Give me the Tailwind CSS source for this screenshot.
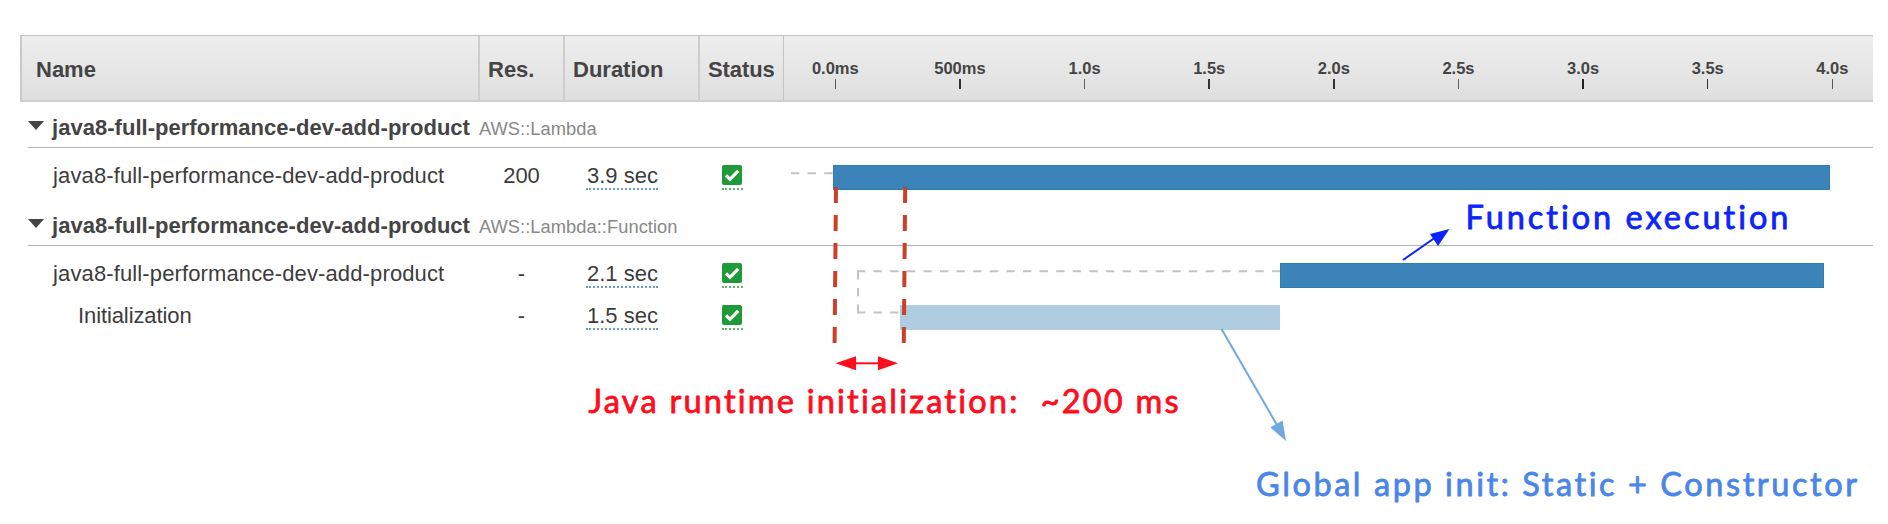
<!DOCTYPE html>
<html lang="en">
<head>
<meta charset="utf-8">
<title>Trace timeline</title>
<script src="https://cdn.jsdelivr.net/npm/@tailwindcss/browser@4"></script>
</head>
<body class="bg-white">
<svg class="hidden">
  <symbol id="check" viewBox="0 0 20 20"><rect width="20" height="20" rx="2" fill="#1f9a38"/><path d="M4 10.3l4 4 8.2-8.5" fill="none" stroke="#fff" stroke-width="3.2"/></symbol>
</svg>
<main class="relative h-[524px] w-[1888px] overflow-hidden pt-[35px] pl-5 font-['Liberation_Sans',Arial,sans-serif] text-[22px] leading-[26px] text-[#3c3c3c]">
  <header class="flex h-[67px] w-[1853px] border-t border-b-2 border-l-2 border-t-[#c4c4c4] border-b-[#cfcfcf] border-l-[#cacaca] bg-linear-to-b from-[#eeeeee] to-[#dfdfdf] font-bold text-[#444]">
    <div class="flex w-[458px] shrink-0 items-center border-r-2 border-[#cdcdcd] pl-[14px] pt-[3px]">Name</div>
    <div class="flex w-[85px] shrink-0 items-center border-r-2 border-[#cdcdcd] pl-2 pt-[3px]">Res.</div>
    <div class="flex w-[135px] shrink-0 items-center border-r-2 border-[#cdcdcd] pl-2 pt-[3px]">Duration</div>
    <div class="flex w-[84px] shrink-0 items-center border-r border-[#c4c4c4] pl-2 pt-[3px] tracking-[-0.1px]">Status</div>
    <div class="-ml-[11px] flex shrink-0 pt-[22px] text-[16.5px] leading-5">
      <div class="flex w-[124.63px] shrink-0 flex-col items-center">0.0ms<i class="mt-px h-[10px] w-[1.5px] bg-[#555]"></i></div>
      <div class="flex w-[124.63px] shrink-0 flex-col items-center">500ms<i class="mt-px h-[10px] w-[1.5px] bg-[#333]"></i></div>
      <div class="flex w-[124.63px] shrink-0 flex-col items-center">1.0s<i class="mt-px h-[10px] w-[1.5px] bg-[#666]"></i></div>
      <div class="flex w-[124.63px] shrink-0 flex-col items-center">1.5s<i class="mt-px h-[10px] w-[1.5px] bg-[#333]"></i></div>
      <div class="flex w-[124.63px] shrink-0 flex-col items-center">2.0s<i class="mt-px h-[10px] w-[1.5px] bg-[#333]"></i></div>
      <div class="flex w-[124.63px] shrink-0 flex-col items-center">2.5s<i class="mt-px h-[10px] w-[1.5px] bg-[#666]"></i></div>
      <div class="flex w-[124.63px] shrink-0 flex-col items-center">3.0s<i class="mt-px h-[10px] w-[1.5px] bg-[#222]"></i></div>
      <div class="flex w-[124.63px] shrink-0 flex-col items-center">3.5s<i class="mt-px h-[10px] w-[1.5px] bg-[#333]"></i></div>
      <div class="flex w-[124.63px] shrink-0 flex-col items-center">4.0s<i class="mt-px h-[10px] w-[1.5px] bg-[#555]"></i></div>
    </div>
  </header>

  <section class="ml-2 flex h-[46px] w-[1845px] items-center border-b border-[#b4b4b4] pt-[5px]">
    <svg class="mb-[3px] h-[9px] w-4" viewBox="0 0 16 9"><path d="M0 0h16L8 9z" fill="#444"/></svg>
    <h2 class="ml-2 w-[427px] pt-[2px] font-bold tracking-[0.03px] text-[#444]">java8-full-performance-dev-add-product</h2>
    <span class="pt-[3px] text-[18.3px] tracking-[0.05px] text-[#888]">AWS::Lambda</span>
  </section>
  <div class="flex h-[52px] w-[1853px] items-center pt-[2px]">
    <div class="w-[459px] pt-[2px] pl-[33px] tracking-[0.13px]">java8-full-performance-dev-add-product</div>
    <div class="w-[85px] pt-[2px] text-center">200</div>
    <div class="w-[134px] pl-[22px]"><span class="inline-block h-[29px] w-[72px] border-b-2 border-dotted border-[#6a9bd0] pl-px leading-[30px]">3.9 sec</span></div>
    <div class="w-[86px] pl-6"><svg class="mt-1 h-5 w-5"><use href="#check"/></svg><i class="mt-[3px] block w-[21px] border-b-2 border-dotted border-[#5fb570]"></i></div>
    <div class="flex pt-1 pl-[7px]">
      <svg class="h-[25px] w-[42px]"><path d="M0 8.3H42" stroke="#c3c3c3" stroke-width="2" stroke-dasharray="8.3 8.3"/></svg>
      <div class="h-[25px] w-[996.5px] border border-[#2a7fb6] bg-[#3b83b9]"></div>
    </div>
  </div>

  <section class="ml-2 flex h-[46px] w-[1845px] items-center border-b border-[#b4b4b4] pt-[5px]">
    <svg class="mb-[3px] h-[9px] w-4" viewBox="0 0 16 9"><path d="M0 0h16L8 9z" fill="#444"/></svg>
    <h2 class="ml-2 w-[427px] pt-[2px] font-bold tracking-[0.03px] text-[#444]">java8-full-performance-dev-add-product</h2>
    <span class="pt-[3px] text-[18.3px] tracking-[0.05px] text-[#888]">AWS::Lambda::Function</span>
  </section>
  <div class="flex h-[48px] w-[1853px] items-center pt-[7px]">
    <div class="w-[459px] pt-px pl-[33px] tracking-[0.13px]">java8-full-performance-dev-add-product</div>
    <div class="w-[85px] pt-px text-center">-</div>
    <div class="w-[134px] pl-[22px]"><span class="inline-block h-[29px] w-[72px] border-b-2 border-dotted border-[#6a9bd0] pl-px leading-[30px]">2.1 sec</span></div>
    <div class="w-[86px] pl-6"><svg class="mt-1 h-5 w-5"><use href="#check"/></svg><i class="mt-[3px] block w-[21px] border-b-2 border-dotted border-[#5fb570]"></i></div>
    <div class="flex pt-1 pl-[73px]">
      <svg class="h-[25px] w-[423px] overflow-visible" fill="none" stroke="#c3c3c3" stroke-width="2" stroke-dasharray="8.3 8.3"><path d="M0 8.3H423M1 8.3V50M0 49.6H42"/></svg>
      <div class="h-[25px] w-[544px] border border-[#2a7fb6] bg-[#3b83b9]"></div>
    </div>
  </div>
  <div class="flex h-[42px] w-[1853px] items-center">
    <div class="w-[459px] pt-[2px] pl-[58px] tracking-[-0.1px]">Initialization</div>
    <div class="w-[85px] pt-px text-center">-</div>
    <div class="w-[134px] pl-[22px]"><span class="inline-block h-[29px] w-[72px] border-b-2 border-dotted border-[#6a9bd0] pl-px leading-[30px]">1.5 sec</span></div>
    <div class="w-[86px] pl-6"><svg class="mt-1 h-5 w-5"><use href="#check"/></svg><i class="mt-[3px] block w-[21px] border-b-2 border-dotted border-[#5fb570]"></i></div>
    <div class="flex pt-1 pl-[115.5px]">
      <div class="h-[25px] w-[380.5px] bg-[#b0cce1]"></div>
    </div>
  </div>

  <!-- Annotations drawn over the timeline -->
  <svg class="absolute top-0 left-0 h-[524px] w-[1888px]" viewBox="0 0 1888 524">
    <g stroke="#cc4028" stroke-width="4" stroke-dasharray="16 12"><path d="M836 187L834.6 343"/><path d="M905.2 187L903.8 343"/></g>
    <path d="M852 363.3H882" stroke="#ff0d1d" stroke-width="2"/>
    <path d="M835.5 363.3L856 356.3V370.3zM898 363.3L878 356.3V370.3z" fill="#ff0d1d"/>
    <path d="M1403 260L1436 237" stroke="#0b24fb" stroke-width="2"/>
    <path d="M1449.5 229L1430 234L1438 246z" fill="#0b24fb"/>
    <path d="M1221.5 329L1277 425" stroke="#6fa8dc" stroke-width="2"/>
    <path d="M1286 441L1270.3 427.5L1282.5 420.5z" fill="#6fa8dc"/>
    <g class="font-['Lato',sans-serif] text-[32.5px] font-normal [font-variant-ligatures:none]" stroke-width=".8" stroke-linejoin="round">
      <text x="1465.5" y="228.5" textLength="323" fill="#0b24fb" stroke="#0b24fb">Function execution</text>
      <text x="588.5" y="413" textLength="590" fill="#ff0d1d" stroke="#ff0d1d">Java runtime initialization:&nbsp; ~200 ms</text>
      <text x="1256" y="495.5" textLength="601" fill="#4a86e8" stroke="#4a86e8">Global app init: Static + Constructor</text>
    </g>
  </svg>
</main>
</body>
</html>
